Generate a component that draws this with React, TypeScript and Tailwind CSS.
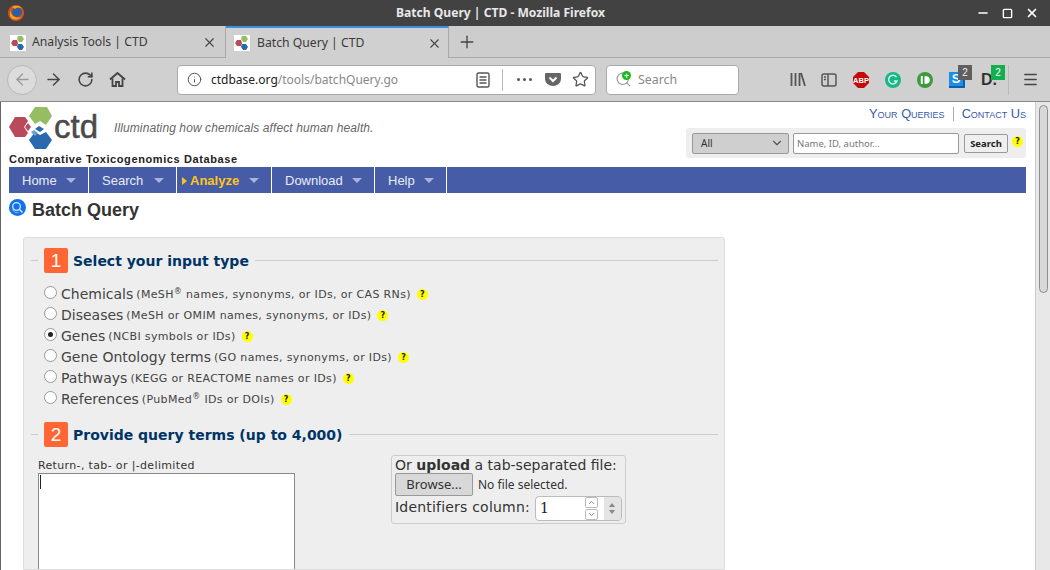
import React from 'react';
import { ArrowLeft, ArrowRight, RotateCw, Info, Star, X, Plus, Minus, Menu, ChevronDown, ChevronUp, Search, Square } from 'lucide-react';

const Favicon = () => (
  <svg width="16" height="16" viewBox="0 0 16 16" className="bg-white shrink-0">
    <polygon points="1,8 3,5 7,5 8,8 7,11 3,11" fill="#b84a5c" />
    <polygon points="8,1 12,1 14,4 12,7 9,7 7,4" fill="#96bd62" />
    <polygon points="8,9 12,9 14,12 12,15 9,15 7,12" fill="#2a69ad" />
  </svg>
);

const Help = () => (
  <span className="flex items-center justify-center w-[11px] h-[11px] rounded-full bg-[#ffff00] text-[8px] font-bold leading-none text-[#222] font-['DejaVu_Sans',sans-serif] shrink-0">
    ?
  </span>
);

const Tab = ({ title, active }: { title: string; active?: boolean }) => (
  <div
    className={`h-[32px] flex items-center border-r border-[#a8a8a8] ${
      active ? 'w-[223px] pl-[8px] pr-[6px] border-t-2 border-t-[#3b8fe0] bg-[#d0d0d0]' : 'w-[226px] pl-[10px] pr-[8px] pt-[2px] border-b border-b-[#a8a8a8]'
    }`}
  >
    <Favicon />
    <span className={`${active ? 'ml-[7px]' : 'ml-[6px]'} text-[12.2px] text-[#3a3a3a] flex-1`}>{title}</span>
    <X size={15} strokeWidth={1.8} className="text-[#444]" />
  </div>
);

const types = [
  { name: 'Chemicals', note: <>(MeSH<sup className="text-[8px] leading-none">®</sup> names, synonyms, or IDs, or CAS RNs)</> },
  { name: 'Diseases', note: <>(MeSH or OMIM names, synonyms, or IDs)</> },
  { name: 'Genes', note: <>(NCBI symbols or IDs)</>, checked: true },
  { name: 'Gene Ontology terms', note: <>(GO names, synonyms, or IDs)</> },
  { name: 'Pathways', note: <>(KEGG or REACTOME names or IDs)</> },
  { name: 'References', note: <>(PubMed<sup className="text-[8px] leading-none">®</sup> IDs or DOIs)</> },
];

const navItems = [
  { label: 'Home', w: 'w-[80px]' },
  { label: 'Search', w: 'w-[88px]' },
  { label: 'Analyze', w: 'w-[95px]', active: true },
  { label: 'Download', w: 'w-[103px]' },
  { label: 'Help', w: 'w-[72px]' },
];

const SectionHead = ({ n, title }: { n: string; title: string }) => (
  <div className="flex items-center">
    <div className="w-[7px] h-px bg-[#ccc]" />
    <div className="ml-[6px] w-[24px] h-[25px] rounded-[2px] bg-[#ff6633] text-white text-[19px] leading-[25px] text-center font-['Liberation_Sans',sans-serif]">
      {n}
    </div>
    <div className="ml-[5px] mt-[1px] text-[14px] font-bold text-[#003366]">{title}</div>
    <div className="ml-[6px] flex-1 h-px bg-[#ccc]" />
  </div>
);

export default function App() {
  return (
    <div className="w-[1050px] h-[570px] overflow-hidden flex flex-col bg-white font-['Noto_Sans',sans-serif]">
      {/* window title */}
      <div className="h-[26px] bg-[#424242] flex items-center relative shrink-0">
        <svg width="18" height="18" viewBox="0 0 18 18" className="ml-[7px]">
          <circle cx="9" cy="9" r="8" fill="#d9501e" />
          <circle cx="10" cy="8" r="5" fill="#2c5f9e" />
          <path d="M3 6c1 6 6 9 11 7-2 3-9 4-11-1z" fill="#f6a21e" />
          <path d="M5 3c3-2 8-2 10 2-3-2-6-1-7 0z" fill="#f6a21e" />
        </svg>
        <div className="flex-1 text-center text-[12.1px] font-bold text-[#e8e8e8]">Batch Query | CTD - Mozilla Firefox</div>
        <div className="flex items-center gap-[12px] pr-[11px] text-white">
          <Minus size={14} strokeWidth={2.5} />
          <Square size={11} strokeWidth={3} />
          <X size={14} strokeWidth={3} />
        </div>
      </div>

      {/* tabs */}
      <div className="h-[32px] bg-[#cdcdcd] flex items-stretch shrink-0">
        <Tab title="Analysis Tools | CTD" />
        <Tab title="Batch Query | CTD" active />
        <div className="w-[36px] flex items-center justify-center border-b border-[#a8a8a8]">
          <Plus size={20} strokeWidth={1.6} className="text-[#444]" />
        </div>
        <div className="flex-1 border-b border-[#a8a8a8]" />
      </div>

      {/* nav toolbar */}
      <div className="h-[44px] bg-[#d0d0d0] flex items-center shrink-0 border-b border-[#8a8a8a] text-[#444]">
        <div className="ml-[7px] w-[30px] h-[30px] rounded-full border border-[#b8b8b8] bg-[#dcdcdc] flex items-center justify-center">
          <ArrowLeft size={19} strokeWidth={1.6} className="text-[#9a9a9a]" />
        </div>
        <ArrowRight size={19} strokeWidth={1.8} className="ml-[7px]" />
        <RotateCw size={17} strokeWidth={2.2} className="ml-[14px]" />
        <svg width="17" height="17" viewBox="0 0 17 17" className="ml-[15px]" fill="none" stroke="#444" strokeWidth="2">
          <path d="M1 8.5L8.5 2 16 8.5" />
          <path d="M3.5 7.5V15h3.5v-4h3v4h3.5V7.5" strokeWidth="1.8" />
        </svg>
        <div className="ml-[51px] w-[419px] h-[30px] bg-white rounded-[4px] border border-[#aaa] flex items-center pl-[9px] pr-[6px]">
          <Info size={15} strokeWidth={1.6} className="text-[#555]" />
          <span className="ml-[9px] mt-[1px] text-[12px] text-[#222]">ctdbase.org<span className="text-[#888]">/tools/batchQuery.go</span></span>
          <div className="flex-1" />
          <svg width="14" height="16" viewBox="0 0 14 16" fill="none" stroke="#555" strokeWidth="1.4">
            <rect x="1" y="1" width="12" height="14" rx="1.5" />
            <path d="M3.5 5h7M3.5 8h7M3.5 11h7" />
          </svg>
          <div className="ml-[12px] w-px h-[22px] bg-[#bbb]" />
          <span className="ml-[14px] flex gap-[3px]">
            <i className="w-[3px] h-[3px] rounded-full bg-[#555]" />
            <i className="w-[3px] h-[3px] rounded-full bg-[#555]" />
            <i className="w-[3px] h-[3px] rounded-full bg-[#555]" />
          </span>
          <svg width="16" height="15" viewBox="0 0 16 15" className="ml-[13px]">
            <path d="M1 1h14a1 1 0 0 1 1 1v5a8 7 0 0 1-16 0V2a1 1 0 0 1 1-1z" fill="#666" />
            <path d="M4.5 5.5L8 9l3.5-3.5" stroke="#fff" strokeWidth="2" fill="none" />
          </svg>
          <Star size={17} strokeWidth={1.8} className="ml-[11px] text-[#555]" />
        </div>
        <div className="ml-[10px] w-[133px] h-[30px] bg-white rounded-[4px] border border-[#aaa] flex items-center pl-[8px] relative">
          <Search size={17} strokeWidth={1.6} className="text-[#999]" />
          <span className="absolute left-[15px] top-[5px] w-[9px] h-[9px] rounded-full bg-[#1cb91c] text-white text-[9px] leading-[9px] text-center font-bold">+</span>
          <span className="ml-[6px] mt-[1px] text-[12.4px] text-[#888]">Search</span>
        </div>
        <div className="flex-1" />
        <svg width="16" height="15" viewBox="0 0 16 15" stroke="#555" strokeWidth="1.8" fill="none" className="mr-[15px]">
          <path d="M1.5 1v13M5.5 1v13M9.5 1v13M11 1l4 13" />
        </svg>
        <svg width="16" height="14" viewBox="0 0 16 14" stroke="#555" strokeWidth="1.5" fill="none" className="mr-[16px]">
          <rect x="1" y="1" width="14" height="12" rx="2" />
          <path d="M7 1v12M3 4h2M3 6.5h2" />
        </svg>
        <svg width="16" height="16" viewBox="0 0 16 16" className="mr-[16px]">
          <polygon points="5,0 11,0 16,5 16,11 11,16 5,16 0,11 0,5" fill="#c40a0a" />
          <text x="8" y="10.8" textAnchor="middle" fontSize="7.5" fontWeight="bold" fill="#fff" fontFamily="Liberation Sans">ABP</text>
        </svg>
        <svg width="16" height="16" viewBox="0 0 16 16" className="mr-[16px]" fill="none">
          <circle cx="8" cy="8" r="8" fill="#15b786" />
          <path d="M11.5 5.2A4.3 4.3 0 1 0 12 9H8.8" stroke="#d8f5ea" strokeWidth="1.5" />
        </svg>
        <svg width="16" height="16" viewBox="0 0 16 16" className="mr-[16px]" fill="none">
          <circle cx="8" cy="8" r="8" fill="#3d9a3d" />
          <path d="M4.8 4v8" stroke="#fff" strokeWidth="2" />
          <path d="M7.5 4.2h1.5a3.8 3.8 0 0 1 0 7.6H7.5z" fill="#fff" />
        </svg>
        <div className="mr-[16px] w-[16px] h-[16px] bg-[#1a8fe8] border-b-2 border-r-2 border-b-[#0e5ea8] border-r-[#0e5ea8] text-white text-[13px] font-bold leading-[14px] text-center relative font-['Liberation_Sans',sans-serif]">
          S
          <span className="absolute left-[9px] -top-[7px] w-[14px] h-[15px] bg-[#5f5f5f] text-[#eee] text-[10px] font-normal leading-[15px]">2</span>
        </div>
        <div className="mr-[8px] w-[16px] h-[16px] text-[#333] text-[16px] font-bold leading-[16px] relative font-['Liberation_Sans',sans-serif]">
          D.
          <span className="absolute left-[10px] -top-[7px] w-[14px] h-[15px] bg-[#10b04f] text-white text-[10px] font-normal leading-[15px] text-center">2</span>
        </div>
        <div className="w-px h-[30px] bg-[#bbb] ml-[3px]" />
        <Menu size={17} strokeWidth={2} className="ml-[13px] mr-[11px]" />
      </div>

      {/* page */}
      <div className="flex-1 flex min-h-0 border-l border-[#666]">
        <div className="flex-1 min-w-0 flex flex-col pl-[8px] pr-[9px]">
          {/* header */}
          <div className="h-[65px] flex shrink-0 relative">
            <div className="flex flex-col">
              <div className="flex items-start h-[49px] pt-[5px]">
                <svg width="44" height="43" viewBox="0 0 44 43">
                  <polygon points="0,20 6,10 16,10 19,14 15,20 19,26 16,30 6,30" fill="#b84a5c" />
                  <polygon points="16,20 19,16 22,20 19,24" fill="#b84a5c" />
                  <polygon points="20,9 26,0 38,0 43,9 37,18 31,14 26,17" fill="#96bd62" />
                  <polygon points="20,33 26,25 31,28 37,25 43,33 37,42 26,42" fill="#2a69ad" />
                  <polygon points="26,22 30,19 35,22 31,25" fill="#2a69ad" />
                  <polygon points="22,25 25,23 29,26 26,29" fill="#6f9fd0" />
                </svg>
                <span className="ml-[1px] mt-[3px] text-[33px] leading-[33px] text-[#4a4a4a] [-webkit-text-stroke:0.5px_#4a4a4a] font-['Liberation_Sans',sans-serif]">ctd</span>
                <span className="ml-[16px] mt-[12px] text-[12px] italic text-[#666] font-['Liberation_Sans',sans-serif] tracking-[0.1px]">Illuminating how chemicals affect human health.</span>
              </div>
              <div className="text-[11px] font-bold text-[#222] tracking-[0.6px] font-['Liberation_Sans',sans-serif]">Comparative Toxicogenomics Database</div>
            </div>
            <div className="flex-1" />
            <div className="flex flex-col items-end font-['Liberation_Sans',sans-serif]">
              <div className="flex items-center mt-[5px] text-[#3a5aa8] text-[12.8px] leading-[14px] [font-variant-caps:small-caps]">
                <span className="pr-[8px] border-r border-[#aaa]">Your Queries</span>
                <span className="pl-[8px]">Contact Us</span>
              </div>
              <div className="mt-[7px] w-[340px] h-[30px] bg-[#eeeeee] rounded-[3px] flex items-center pl-[6px]">
                <div className="w-[97px] h-[21px] rounded-[2px] border border-[#999] bg-[#cfcfcf] flex items-center justify-between pl-[8px] pr-[4px] text-[10px] text-[#333] font-['Noto_Sans',sans-serif]">
                  All
                  <ChevronDown size={14} strokeWidth={2} className="text-[#555]" />
                </div>
                <div className="ml-[4px] w-[166px] h-[21px] rounded-[2px] border border-[#999] bg-white pl-[3px] text-[9.5px] leading-[19px] text-[#777] font-['Noto_Sans',sans-serif]">Name, ID, author...</div>
                <div className="ml-[5px] w-[44px] h-[19px] rounded-[2px] border border-[#999] bg-[#efefef] text-center text-[9.5px] font-bold leading-[17px] text-[#222] font-['Noto_Sans',sans-serif]">Search</div>
                <span className="ml-[4px] -mt-[3px]"><Help /></span>
              </div>
            </div>
          </div>

          {/* menu bar */}
          <div className="h-[26px] bg-[#465ca6] flex shrink-0 font-['Liberation_Sans',sans-serif] text-[13px]">
            {navItems.map((item) => (
              <div key={item.label} className={`${item.w} border-r border-white flex items-center justify-between pr-[12px] ${item.active ? 'pl-[5px] font-bold text-[#ffc61a]' : 'pl-[13px] text-[#e8ecf8]'}`}>
                <span className="flex items-center mt-[1px]">
                  {item.active && <i className="mr-[3px] border-y-[4px] border-y-transparent border-l-[5px] border-l-[#ffc61a]" />}
                  {item.label}
                </span>
                <i className="border-x-[5px] border-x-transparent border-t-[5px] border-t-[#a9b4d8]" />
              </div>
            ))}
          </div>

          {/* heading */}
          <div className="h-[44px] flex shrink-0 items-start">
            <svg width="17" height="17" viewBox="0 0 17 17" fill="none" className="mt-[6px]">
              <circle cx="8.5" cy="8.5" r="8.5" fill="#1272ee" />
              <circle cx="7.5" cy="7.5" r="3.8" stroke="#dbe9ff" strokeWidth="1.3" />
              <path d="M10.5 10.5l3 3" stroke="#dbe9ff" strokeWidth="1.5" />
              <path d="M3.5 10.5c1.5 3 4 3.5 6 3" stroke="#9cc4fa" strokeWidth="1" />
            </svg>
            <h1 className="ml-[6px] mt-[6px] text-[18px] leading-[22px] font-bold text-[#333] font-['Liberation_Sans',sans-serif]">Batch Query</h1>
          </div>

          {/* form panel */}
          <div className="ml-[14px] w-[702px] flex-1 bg-[#eeeeee] border border-[#dddddd] rounded-t-[3px] pl-[7px] pr-[6px] pt-[10px] font-['DejaVu_Sans',sans-serif] text-[#333] overflow-hidden">
            <SectionHead n="1" title="Select your input type" />
            <div className="mt-[11px] flex flex-col ml-[13px]">
              {types.map((t) => (
                <div key={t.name} className="h-[21px] flex items-center">
                  <div className="w-[13px] h-[13px] rounded-full border border-[#999] bg-white flex items-center justify-center shrink-0 -mt-[4px]">
                    {t.checked && <i className="w-[5px] h-[5px] rounded-full bg-[#222]" />}
                  </div>
                  <span className="ml-[4px] text-[14px] text-[#444]">{t.name}</span>
                  <span className="ml-[3px] mt-[2px] text-[11px] text-[#444] tracking-[0.35px]">{t.note}</span>
                  <span className="ml-[6px]"><Help /></span>
                </div>
              ))}
            </div>
            <div className="mt-[12px]"><SectionHead n="2" title="Provide query terms (up to 4,000)" /></div>
            <div className="mt-[8px] flex ml-[7px]">
              <div className="w-[257px] shrink-0 pt-[3px]">
                <div className="text-[11px] leading-[15px] text-[#333] tracking-[0.35px]">Return-, tab- or |-delimited</div>
                <div className="h-[200px] bg-white border border-[#888] pl-[1px] pt-[1px]">
                  <div className="w-px h-[14px] bg-[#222]" />
                </div>
              </div>
              <div className="ml-[96px] w-[235px] h-[69px] border border-[#ccc] rounded-[3px] px-[3px] text-[#333]">
                <div className="text-[14px] pt-[1px] leading-[16px] whitespace-nowrap">Or <b>upload</b> a tab-separated file:</div>
                <div className="flex items-center">
                  <div className="w-[78px] h-[23px] rounded-[2px] border border-[#999] bg-[#d8d8d8] text-center text-[13px] leading-[21px] font-['Noto_Sans',sans-serif]">Browse...</div>
                  <span className="ml-[5px] text-[12px] font-['Noto_Sans',sans-serif]">No file selected.</span>
                </div>
                <div className="flex items-center">
                  <span className="text-[14px] tracking-[0.2px] -mt-[3px] whitespace-nowrap">Identifiers column:</span>
                  <div className="ml-[5px] w-[87px] shrink-0 h-[25px] rounded-[4px] border border-[#bbb] bg-white flex items-center pl-[4px] overflow-hidden">
                    <span className="flex-1 text-[14px] font-['DejaVu_Serif',serif] text-[#222]">1</span>
                    <div className="w-[13px] h-full flex flex-col gap-px">
                      <div className="flex-1 border border-[#bbb] rounded-[2px] flex items-center justify-center"><ChevronUp size={9} className="text-[#666]" /></div>
                      <div className="flex-1 border border-[#bbb] rounded-[2px] flex items-center justify-center"><ChevronDown size={9} className="text-[#666]" /></div>
                    </div>
                    <div className="ml-[6px] w-[17px] h-full bg-[#e4e4e4] flex flex-col items-center justify-center gap-[3px]">
                      <i className="border-x-[3px] border-x-transparent border-b-[4px] border-b-[#888]" />
                      <i className="border-x-[3px] border-x-transparent border-t-[4px] border-t-[#888]" />
                    </div>
                  </div>
                </div>
              </div>
            </div>
          </div>
        </div>

        {/* scrollbar */}
        <div className="w-[15px] shrink-0 bg-[#e8e8e8] border-l border-[#ccc] pt-[3px] flex justify-center">
          <div className="w-[9px] h-[188px] rounded-full bg-[#d8d8d8] border border-[#8e8e8e]" />
        </div>
      </div>
    </div>
  );
}
